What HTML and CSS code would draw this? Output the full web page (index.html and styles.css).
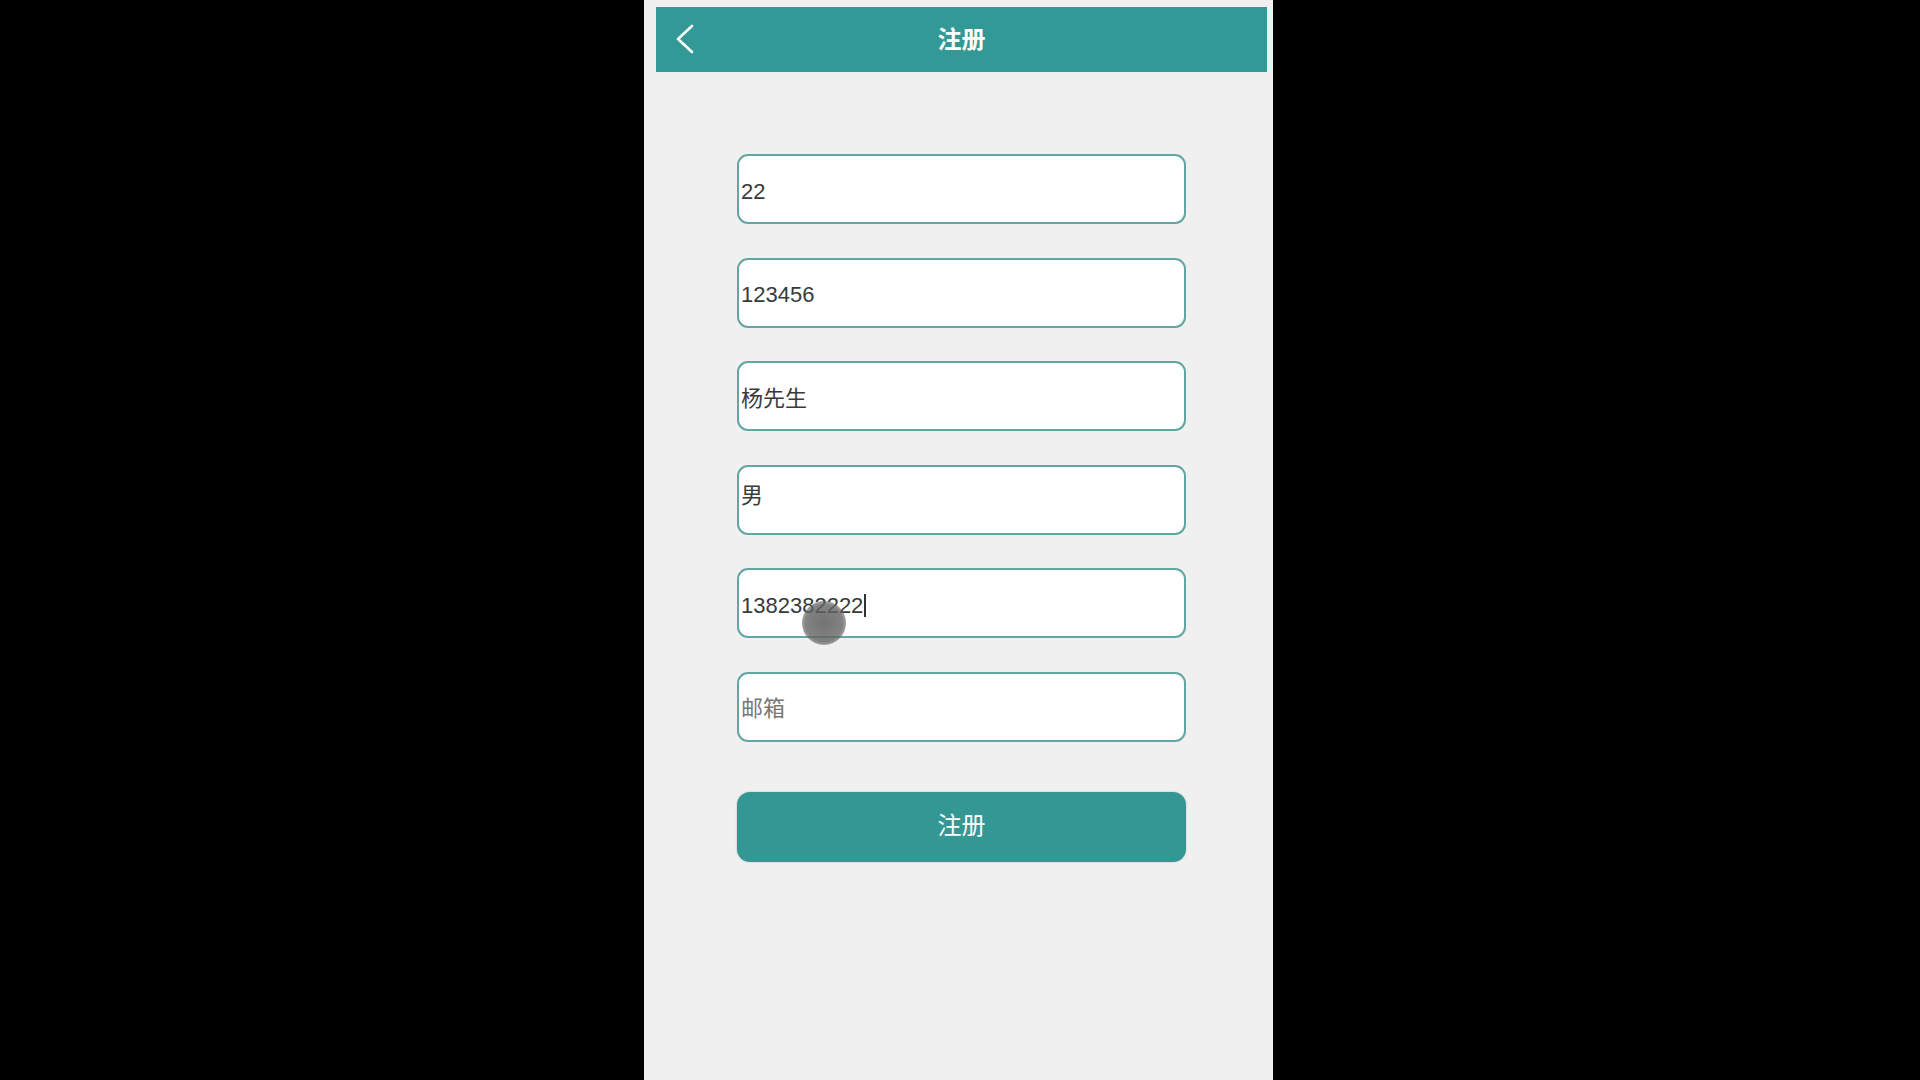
FILE: index.html
```html
<!DOCTYPE html>
<html lang="zh-CN">
<head>
<meta charset="utf-8">
<title>注册</title>
<link rel="stylesheet" href="styles.css">
</head>
<body>
<div class="phone">
  <header class="topbar">
    <svg class="back" width="20" height="30" viewBox="0 0 20 30"><polyline points="17,2 3,15 17,28" fill="none" stroke="#ffffff" stroke-width="2.6" stroke-linecap="round" stroke-linejoin="round"/></svg>
    <h1 class="title">注册</h1>
  </header>
  <main class="form">
    <div class="field"><span class="val">22</span></div>
    <div class="field"><span class="val">123456</span></div>
    <div class="field"><span class="val cjk">杨先生</span></div>
    <div class="field"><span class="val cjk-high">男</span></div>
    <div class="field"><span class="val">1382382222</span><span class="caret"></span></div>
    <div class="field"><span class="ph cjk">邮箱</span></div>
    <button class="submit"><span class="btn-label">注册</span></button>
  </main>
  <div class="touch"></div>
</div>
</body>
</html>
```
FILE: styles.css
```css
html, body {
  margin: 0;
  padding: 0;
  background: #000000;
  height: 100%;
}
body {
  font-family: "Liberation Sans", "Noto Sans CJK SC", sans-serif;
}
.phone {
  position: relative;
  width: 629px;
  height: 1080px;
  margin-left: 644px;
  background: #f0f0f0;
  overflow: hidden;
}
.topbar {
  position: relative;
  margin: 7px 6px 0 12px;
  height: 65px;
  background: #339996;
  display: flex;
  align-items: center;
  justify-content: center;
}
.back {
  position: absolute;
  left: 19px;
  top: 17px;
}
.title {
  margin: 0;
  padding-bottom: 4px;
  color: #ffffff;
  font-size: 24px;
  font-weight: bold;
  font-family: "Noto Sans CJK SC", sans-serif;
  line-height: 1;
}
.form {
  margin: 82px 6px 0 12px;
  display: flex;
  flex-direction: column;
  align-items: center;
  gap: 33.6px;
}
.field {
  box-sizing: border-box;
  width: 449px;
  height: 70px;
  background: #ffffff;
  border: 2.5px solid #62a6a2;
  border-radius: 11px;
  display: flex;
  align-items: center;
  padding: 5px 2px 0 2px;
  font-size: 22px;
  color: #3a3a3a;
}
.val, .ph {
  white-space: nowrap;
}
.cjk {
  padding-bottom: 6px;
}
.cjk-high {
  padding-bottom: 18px;
}
.ph {
  color: #777777;
}
.caret {
  display: inline-block;
  width: 1.5px;
  height: 23px;
  background: #333333;
  margin-left: 1px;
}
.submit {
  box-sizing: border-box;
  width: 449px;
  height: 70px;
  margin-top: 16px;
  border: none;
  border-radius: 13px;
  background: #339894;
  color: #ffffff;
  font-size: 24px;
  font-family: "Noto Sans CJK SC", sans-serif;
  box-shadow: 0 0 2px rgba(0, 0, 0, 0.25);
  display: flex;
  align-items: center;
  justify-content: center;
}
.btn-label {
  padding-bottom: 7px;
}
.touch {
  position: absolute;
  left: 158px;
  top: 601px;
  width: 44px;
  height: 44px;
  border-radius: 50%;
  background: radial-gradient(circle, rgba(90, 90, 90, 0.85) 0%, rgba(100, 100, 100, 0.8) 60%, rgba(120, 120, 120, 0) 100%);
}
```
